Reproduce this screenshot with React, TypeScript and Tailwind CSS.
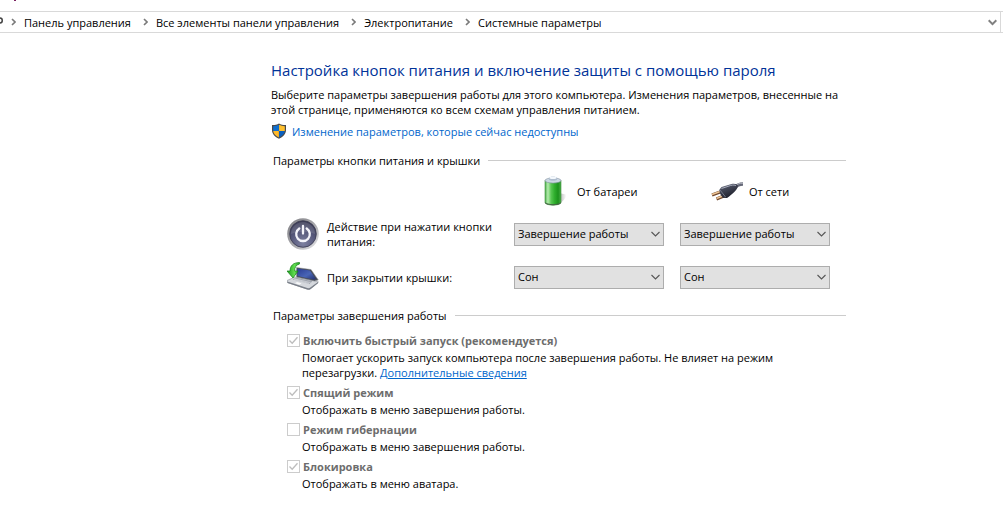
import { useState } from "react";

const CRUMBS = ["Панель управления", "Все элементы панели управления", "Электропитание", "Системные параметры"];

const ACTIONS = ["Действие не требуется", "Сон", "Гибернация", "Завершение работы"];

function CrumbArrow() {
  return (
    <svg width="5" height="8" viewBox="0 0 5 8" fill="none" stroke="#7a7a7a" strokeWidth="1.6" aria-hidden="true">
      <path d="M1 1l3 3-3 3" />
    </svg>
  );
}

function ShieldIcon() {
  return (
    <svg width="16" height="16" viewBox="0 0 16 16" className="shrink-0" aria-hidden="true">
      <path d="M8 .4C6 1.700 3.600 2.200 1 2.100v5C1 11 4 14 8 15.800c4-1.800 7-4.800 7-8.700v-5C12.400 2.200 10 1.700 8 .4z" fill="#4a4a4a" />
      <path d="M7.900 1.800v6.100H2.200V3.200c2.200 0 4.100-.5 5.700-1.400z" fill="#0f6fd0" />
      <path d="M8.100 1.800v6.100h5.700V3.200c-2.200 0-4.100-.5-5.700-1.400z" fill="#ffc02e" />
      <path d="M2.200 8.100h5.700v6.400C4.800 13 2.500 10.800 2.200 8.100z" fill="#ffb92a" />
      <path d="M13.800 8.100H8.100v6.400c3.100-1.500 5.400-3.700 5.700-6.400z" fill="#0a5fbd" />
    </svg>
  );
}

function BatteryIcon() {
  return (
    <svg width="32" height="32" viewBox="0 0 32 32" className="shrink-0" aria-hidden="true">
      <defs>
        <linearGradient id="battery-body" x1="0" x2="1">
          <stop offset="0" stopColor="#4fae4d" />
          <stop offset=".18" stopColor="#b5ecae" />
          <stop offset=".38" stopColor="#58c752" />
          <stop offset=".6" stopColor="#2fae2d" />
          <stop offset=".82" stopColor="#1c921c" />
          <stop offset="1" stopColor="#4cae49" />
        </linearGradient>
        <linearGradient id="battery-shadow" x1="0" x2="1">
          <stop offset="0" stopColor="#b0b0b0" />
          <stop offset="1" stopColor="#fff" />
        </linearGradient>
      </defs>
      <path d="M22 18l7 1.500c1 2-1 5-7 9.500z" fill="url(#battery-shadow)" />
      <path d="M8 5.500v22c1 3.500 15 3.500 16 0v-22z" fill="url(#battery-body)" stroke="#3b8d3a" strokeWidth=".6" />
      <path d="M8 27c2 2.800 14 2.800 16 0v1c-1 3-15 3-16 0z" fill="#456a44" />
      <ellipse cx="16" cy="5.500" rx="8" ry="2.600" fill="#ccd7e3" stroke="#7e8f9d" strokeWidth=".6" />
      <path d="M12 4.800V3c1-2 7-2 8 0v1.800c-1.500 1.400-6.500 1.400-8 0z" fill="#aebdce" />
      <ellipse cx="16" cy="2.800" rx="3.600" ry="1.300" fill="#f4f8fc" />
    </svg>
  );
}

function PlugIcon() {
  return (
    <svg width="32" height="32" viewBox="0 0 32 32" className="shrink-0" aria-hidden="true">
      <defs>
        <linearGradient id="plug-body" x1="0" y1="0" x2=".5" y2="1">
          <stop offset="0" stopColor="#8d92a3" />
          <stop offset=".4" stopColor="#444858" />
          <stop offset="1" stopColor="#1d1e29" />
        </linearGradient>
      </defs>
      <path d="M23 13c3-3 5-4 9-4" fill="none" stroke="#666978" strokeWidth="3.600" />
      <path d="M23 12c3-3 5-3.800 9-3.800" fill="none" stroke="#b4b7c1" strokeWidth="1" />
      <path d="M10.500 16.500l-9.500 3.500M14 20.500l-8.500 3.500" stroke="#70482e" strokeWidth="3" />
      <path d="M10.500 16l-9.500 3.500M14 20l-8.500 3.500" stroke="#edc494" strokeWidth="1.500" />
      <path d="M8.500 14.500l2-2.500 10-3c3-.7 6 .1 6.500 1.800-.5 4-5 8-11 12.200l-4-.2c-2-2.500-4-5-3.500-8.300z" fill="url(#plug-body)" />
      <path d="M10.500 13.500l9-3c3-.8 4.500-.5 5.500.3" fill="none" stroke="#a6abba" strokeWidth="1" />
      <path d="M9 15l5.500 7" stroke="#737787" strokeWidth="1" />
    </svg>
  );
}

function PowerIcon() {
  return (
    <svg width="32" height="32" viewBox="0 0 32 32" className="shrink-0" aria-hidden="true">
      <defs>
        <linearGradient id="power-rim" x1="0" y1="0" x2="1" y2="1">
          <stop offset="0" stopColor="#7d7d82" />
          <stop offset=".55" stopColor="#a9a9ad" />
          <stop offset="1" stopColor="#ececee" />
        </linearGradient>
        <radialGradient id="power-face" cx=".5" cy=".85" r=".8">
          <stop offset="0" stopColor="#7d80a0" />
          <stop offset=".6" stopColor="#55577a" />
          <stop offset="1" stopColor="#3c3d57" />
        </radialGradient>
      </defs>
      <circle cx="16" cy="16" r="15.800" fill="url(#power-rim)" />
      <circle cx="16" cy="16" r="13.300" fill="url(#power-face)" stroke="#3b3b50" strokeWidth=".8" />
      <path d="M4 16a12 12 0 0 1 24 0c-8-3-16-3-24 0z" fill="#fff" opacity=".12" />
      <path d="M12.300 10.500a6.800 6.800 0 1 0 7.400 0" fill="none" stroke="#f4f4fa" strokeWidth="2.300" strokeLinecap="round" />
      <path d="M16 8v7.500" stroke="#f4f4fa" strokeWidth="2.300" strokeLinecap="round" />
    </svg>
  );
}

function LidIcon() {
  return (
    <svg width="32" height="32" viewBox="0 0 32 32" className="shrink-0" aria-hidden="true">
      <defs>
        <linearGradient id="lid-screen" x1="0" y1="0" x2="1" y2="1">
          <stop offset="0" stopColor="#2a3c92" />
          <stop offset=".55" stopColor="#4965b6" />
          <stop offset="1" stopColor="#222d68" />
        </linearGradient>
        <linearGradient id="lid-arrow" x1="0" x2="1">
          <stop offset="0" stopColor="#1c9b1c" />
          <stop offset=".6" stopColor="#62dd50" />
          <stop offset="1" stopColor="#28a526" />
        </linearGradient>
      </defs>
      <path d="M0 19.500l8-3.500 20 4 3.500 1-8 6.500c-1 .8-2 .8-3.500.4L.500 21.500z" fill="#d5d8dd" stroke="#8f939b" strokeWidth=".6" />
      <path d="M.300 20.500l20 6.500c1.300.4 2.300.3 3-.4L31 21v1.200l-7.500 6c-1 .8-2 .8-3.500.4L.500 22z" fill="#7b808a" />
      <path d="M9 16.800l16.500 3.500-3 2.700L5.500 18.500z" fill="#a0a5ae" />
      <path d="M8 18l15.500 3.600M7 18.500l15 3.900" stroke="#eceef2" strokeWidth=".5" />
      <path d="M10 21l4.500 1.200-2 1.500-4.500-1.400z" fill="#f8f9fa" />
      <path d="M9.500 6.500L24 8.500l7.300 10.500-3.800 1L9.500 16z" fill="#474b55" stroke="#8e929b" strokeWidth=".5" />
      <path d="M10.500 7.500L23 9.500l6 8.500-2.200.8L10.500 15z" fill="url(#lid-screen)" />
      <path d="M12.500 1.500C6 1.500 3 5 3 10H0l6 7 5-7H7.700C7.500 6.300 9 4 12.500 3z" fill="url(#lid-arrow)" stroke="#128018" strokeWidth=".7" />
    </svg>
  );
}

function SectionTitle({ children }: { children: string }) {
  return (
    <div className="flex items-center gap-2">
      <h2>{children}</h2>
      <div className="h-px flex-1 bg-[#cccccc]" />
    </div>
  );
}

function ActionSelect({ label, initial }: { label: string; initial: string }) {
  const [value, setValue] = useState(initial);

  return (
    <div className="relative">
      <select
        aria-label={label}
        value={value}
        onChange={(e) => setValue(e.target.value)}
        className="block h-[23px] w-full appearance-none border border-[#adadad] bg-[#e1e1e1] pl-[3px] pr-5 leading-5 text-black focus:outline-none"
      >
        {ACTIONS.map((a) => (
          <option key={a} value={a}>{a}</option>
        ))}
      </select>
      <svg
        className="pointer-events-none absolute right-1 top-2"
        width="9"
        height="7"
        viewBox="0 0 9 7"
        fill="none"
        stroke="#555"
        strokeWidth="1.100"
        aria-hidden="true"
      >
        <path d="M.500 1l4 4 4-4" />
      </svg>
    </div>
  );
}

interface OptionProps {
  id: string;
  title: string;
  checked?: boolean;
  children: React.ReactNode;
}

function ShutdownOption({ id, title, checked = false, children }: OptionProps) {
  return (
    <div>
      <div className="flex h-5 items-center gap-[3px]">
        <div className="relative size-[13px]">
          <input
            id={id}
            type="checkbox"
            disabled
            defaultChecked={checked}
            className="peer block size-[13px] appearance-none border border-[#cccccc] bg-white"
          />
          <svg
            className="pointer-events-none absolute inset-0 hidden peer-checked:block"
            width="13"
            height="13"
            viewBox="0 0 13 13"
            fill="none"
            stroke="#bdbdbd"
            strokeWidth="1.300"
            aria-hidden="true"
          >
            <path d="M2.500 6.500l2.700 2.800 5.300-6" />
          </svg>
        </div>
        <label htmlFor={id} className="font-bold text-[#6d6d6d]">{title}</label>
      </div>
      <p className="pb-[2px] pl-[15px] pr-4">{children}</p>
    </div>
  );
}

export default function App() {
  return (
    <div className="min-h-screen bg-white font-['Open_Sans','Noto_Sans',sans-serif] text-[11px] leading-[15px] text-black">
      {/* tail of the window caption above the address bar */}
      <div className="mb-[10px] ml-[14px] h-px w-[2px] bg-[#7a2060]" />
      <nav className="flex h-[22px] items-center border-y border-[#d9d9d9]">
        <svg width="3" height="10" viewBox="0 0 3 10" fill="none" stroke="#444" strokeWidth="1.500" className="mr-2" aria-hidden="true">
          <path d="M0 1c3 0 3 5 0 5" />
        </svg>
        <ol className="flex flex-1 items-center gap-3">
          {CRUMBS.map((crumb) => (
            <li key={crumb} className="flex items-center gap-2">
              <CrumbArrow />
              <a href="#">{crumb}</a>
            </li>
          ))}
        </ol>
        <button type="button" aria-label="Предыдущие расположения" className="mr-[2px] flex h-5 items-center border-r border-[#d9d9d9] pr-[3px]">
          <svg width="9" height="7" viewBox="0 0 9 7" fill="none" stroke="#808080" strokeWidth="2" aria-hidden="true">
            <path d="M.700 1.300l3.800 3.800 3.800-3.800" />
          </svg>
        </button>
      </nav>

      <main className="ml-[271px] max-w-[580px] pt-[27px]">
        <h1 className="text-[15px] leading-5 text-[#003399]">
          Настройка кнопок питания и включение защиты с помощью пароля
        </h1>
        <p className="mt-[7px]">
          Выберите параметры завершения работы для этого компьютера. Изменения параметров, внесенные на этой странице, применяются ко всем схемам управления питанием.
        </p>
        <a href="#" className="mt-[6px] flex items-center gap-[5px] text-[#0066cc]">
          <ShieldIcon />
          Изменение параметров, которые сейчас недоступны
        </a>

        <section className="ml-[2px] mr-[5px] mt-[14px]">
          <SectionTitle>Параметры кнопки питания и крышки</SectionTitle>
          <div className="ml-[14px] mt-[7px] grid grid-cols-[211px_150px_150px] items-center gap-x-4 gap-y-[11px]">
            <div className="col-start-2 flex items-center gap-2 pl-[23px]">
              <BatteryIcon />
              От батареи
            </div>
            <div className="flex items-center gap-[6px] pl-[31px]">
              <PlugIcon />
              От сети
            </div>

            <div className="flex items-center gap-2">
              <PowerIcon />
              <p>Действие при нажатии кнопки питания:</p>
            </div>
            <ActionSelect label="Кнопка питания, от батареи" initial="Завершение работы" />
            <ActionSelect label="Кнопка питания, от сети" initial="Завершение работы" />

            <div className="flex items-center gap-2">
              <LidIcon />
              <p>При закрытии крышки:</p>
            </div>
            <ActionSelect label="Закрытие крышки, от батареи" initial="Сон" />
            <ActionSelect label="Закрытие крышки, от сети" initial="Сон" />
          </div>
        </section>

        <section className="ml-[2px] mr-[5px] mt-[15px]">
          <SectionTitle>Параметры завершения работы</SectionTitle>
          <div className="ml-[14px] mt-[7px]">
            <ShutdownOption id="fast-startup" title="Включить быстрый запуск (рекомендуется)" checked>
              Помогает ускорить запуск компьютера после завершения работы. Не влияет на режим перезагрузки.{" "}
              <a href="#" className="inline-block text-[#0066cc] underline">Дополнительные сведения</a>
            </ShutdownOption>
            <ShutdownOption id="sleep" title="Спящий режим" checked>
              Отображать в меню завершения работы.
            </ShutdownOption>
            <ShutdownOption id="hibernate" title="Режим гибернации">
              Отображать в меню завершения работы.
            </ShutdownOption>
            <ShutdownOption id="lock" title="Блокировка" checked>
              Отображать в меню аватара.
            </ShutdownOption>
          </div>
        </section>
      </main>
    </div>
  );
}
